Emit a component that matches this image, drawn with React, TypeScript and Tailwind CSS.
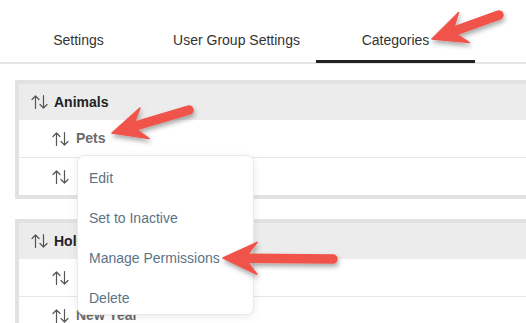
import type { ReactNode } from 'react'

type Pt = [number, number]

function SortIcon() {
  return (
    <svg width="17" height="16" viewBox="0 0 17 16" fill="none" stroke="#555" strokeWidth="1.2" strokeLinecap="round" strokeLinejoin="round" className="shrink-0">
      <path d="M4.5 14.5V2M1 5.5L4.5 2L8 5.5" />
      <path d="M12.5 1.5V14M9 10.5L12.5 14L16 10.5" />
    </svg>
  )
}

function Row({ children, child, header }: { children?: ReactNode; child?: boolean; header?: boolean }) {
  return (
    <div
      className={
        header
          ? 'h-[36px] flex items-center pl-[12px] gap-[6px] bg-[#ececec]'
          : 'h-[37px] flex items-center pl-[33px] gap-[7px] bg-white'
      }
    >
      <SortIcon />
      {children && (
        <span className={child ? 'text-[14px] font-bold text-[#6b6b6b]' : 'text-[14px] font-bold text-[#222]'}>
          {children}
        </span>
      )}
    </div>
  )
}

// rows that sit under the open menu show only their sort handle
function Group({ name, items }: { name: string; items: (string | null)[] }) {
  return (
    <div className="ml-[15px] w-[640px] border-[4px] border-[#e2e2e2] bg-white">
      <Row header>{name}</Row>
      {items.map((item, i) => (
        <div key={i} className={i > 0 ? 'border-t border-[#e6e6e6]' : ''}>
          <Row child>{item}</Row>
        </div>
      ))}
    </div>
  )
}

function arrowShapes(tail: Pt, tip: Pt) {
  const dx = tip[0] - tail[0]
  const dy = tip[1] - tail[1]
  const len = Math.hypot(dx, dy)
  const ux = dx / len
  const uy = dy / len
  const nx = -uy
  const ny = ux
  const L = 31
  const W = 16
  const back: Pt = [tip[0] - ux * L, tip[1] - uy * L]
  const notch: Pt = [tip[0] - ux * L * 0.7, tip[1] - uy * L * 0.7]
  const w1: Pt = [back[0] + nx * W - ux * 3, back[1] + ny * W - uy * 3]
  const w2: Pt = [back[0] - nx * W - ux * 3, back[1] - ny * W - uy * 3]
  const head = [tip, w1, notch, w2].map((p) => p.join(',')).join(' ')
  return { head, notch }
}

function Arrow({ tail, tip }: { tail: Pt; tip: Pt }) {
  const { head, notch } = arrowShapes(tail, tip)
  return (
    <g>
      <line x1={tail[0]} y1={tail[1]} x2={notch[0]} y2={notch[1]} stroke="#f0534a" strokeWidth="9.5" strokeLinecap="round" />
      <polygon points={head} fill="#f0534a" stroke="#f0534a" strokeWidth="1.5" strokeLinejoin="round" />
    </g>
  )
}

export default function App() {
  const menu = ['Edit', 'Set to Inactive', 'Manage Permissions', 'Delete']
  return (
    <div className="relative w-[526px] h-[323px] overflow-hidden bg-white" style={{ fontFamily: '"Liberation Sans", Arial, sans-serif' }}>
      <div className="h-[64px] flex border-b-2 border-[#e6e6e6]">
        {['Settings', 'User Group Settings', 'Categories'].map((t, i) => (
          <div
            key={t}
            className={
              (i === 0 ? 'w-[157px] ' : 'w-[159px] ') +
              'flex justify-center pt-[32px] text-[14px] leading-[16px] text-[#333] ' +
              (i === 2 ? 'border-b-[3px] border-[#222] mb-[-1px]' : '')
            }
          >
            {t}
          </div>
        ))}
      </div>

      <div className="pt-[16px] flex flex-col gap-[20px]">
        <Group name="Animals" items={['Pets', null]} />
        <Group name="Holidays" items={[null, 'New Year']} />
      </div>

      <div className="absolute left-[77px] top-[155px] w-[177px] h-[160px] bg-white rounded-[7px] border border-[#e9e9e9] shadow-[0_2px_8px_rgba(0,0,0,0.08)] pt-[2px]">
        {menu.map((m) => (
          <div key={m} className="h-[40px] flex items-center px-[11px] text-[14px] text-[#5b7386]">
            {m}
          </div>
        ))}
      </div>

      <svg className="absolute inset-0 pointer-events-none" width="526" height="323" viewBox="0 0 526 323">
        <defs>
          <filter id="sh" x="-20%" y="-50%" width="140%" height="200%">
            <feDropShadow dx="1" dy="3" stdDeviation="2.5" floodColor="#000" floodOpacity="0.35" />
          </filter>
        </defs>
        <g filter="url(#sh)">
          <Arrow tail={[499, 15]} tip={[432, 39]} />
          <Arrow tail={[189, 110]} tip={[112, 133]} />
          <Arrow tail={[333, 259]} tip={[223, 258]} />
        </g>
      </svg>
    </div>
  )
}
